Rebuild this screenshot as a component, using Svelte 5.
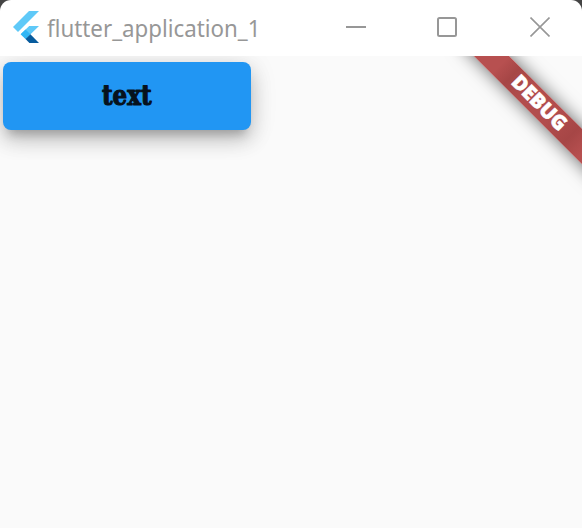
<script>
  const title = 'flutter_application_1';
  const label = 'text';
</script>

<div class="desktop">
  <div class="window">
    <header>
      <svg class="logo" width="26" height="32" viewBox="0 0 26 32" aria-hidden="true">
        <path d="M16 0H26L5 21L0 16Z" fill="#5fc9f8" />
        <path d="M16.2 15H26L17.5 23.3L12.7 28.1L7.7 23.3Z" fill="#5fc9f8" />
        <path d="M12.5 18.5L17.4 23.3L12.5 28.1L7.7 23.3Z" fill="#31b6f5" />
        <path d="M12.5 28.1L17.4 23.3L26 32H16.4Z" fill="#075b9d" />
      </svg>
      <svg class="title" width="230" height="56">
        <text x="0" y="37" textLength="213.5" lengthAdjust="spacingAndGlyphs">{title}</text>
      </svg>
      <div class="controls">
        <svg width="20" height="20"><path d="M0 10H20" /></svg>
        <svg width="20" height="20"><rect x="1" y="1" width="18" height="18" rx="1.5" /></svg>
        <svg width="20" height="20"><path class="thin" d="M.5 .5L19.5 19.5M19.5 .5L.5 19.5" /></svg>
      </div>
    </header>
    <main>
      <button>
        <svg width="70" height="60">
          <text x="10" y="39" textLength="49.5" lengthAdjust="spacingAndGlyphs">{label}</text>
        </svg>
      </button>
      <div class="banner"><span>DEBUG</span></div>
    </main>
  </div>
</div>

<style>
  .desktop {
    width: 582px;
    height: 528px;
    background: #444;
    overflow: hidden;
  }
  .window {
    height: 528px;
    display: flex;
    flex-direction: column;
    background: #fff;
    border-radius: 11px 11px 0 0;
    overflow: hidden;
  }
  svg {
    display: block;
    flex: none;
  }
  header {
    height: 56px;
    flex: none;
    box-sizing: border-box;
    padding: 0 32px 0 13px;
    display: flex;
    align-items: center;
  }
  .logo {
    margin-top: -2px;
  }
  .title {
    margin-left: 8px;
    fill: #979797;
    font: 24px 'Noto Sans', 'Open Sans', sans-serif;
  }
  .controls {
    margin: -2px 0 0 auto;
    display: flex;
    gap: 72px;
  }
  .controls svg {
    fill: none;
    stroke: #979797;
    stroke-width: 2;
  }
  .controls svg:nth-child(2) {
    margin: 0 1px 0 -1px;
  }
  .controls .thin {
    stroke-width: 1.6;
  }
  main {
    position: relative;
    flex: 1;
    overflow: hidden;
    padding: 6px 3px;
    background: #fafafa;
  }
  button {
    width: 248px;
    height: 68px;
    padding: 0;
    border: 0;
    border-radius: 8px;
    display: flex;
    align-items: center;
    justify-content: center;
    background: #2196f3;
    box-shadow:
      0 10px 10px -6px rgba(0, 0, 0, 0.2),
      0 10px 20px 1px rgba(0, 0, 0, 0.17),
      0 4px 28px rgba(0, 0, 0, 0.12);
  }
  button text {
    font: bold 27px 'DejaVu Serif', serif;
    fill: #06121d;
    stroke: #06121d;
    stroke-width: 1.2;
    stroke-linejoin: round;
  }
  .banner {
    position: absolute;
    left: 439.5px;
    top: 35.6px;
    width: 200px;
    height: 24.8px;
    display: flex;
    align-items: center;
    justify-content: center;
    transform: rotate(45deg);
    background: linear-gradient(90deg, #b75050 22%, #a64646 30%, #b24d4d 42%, #b24d4d 58%, #a64646 72%, #b75050 82%);
    box-shadow: 0 0 18px rgba(0, 0, 0, 0.6);
    color: #fff;
    font: 800 20px/24px 'Open Sans', sans-serif;
    -webkit-text-stroke: 0.6px #fff;
  }
  .banner span {
    transform: translate(-1.5px, -0.5px);
  }
</style>
